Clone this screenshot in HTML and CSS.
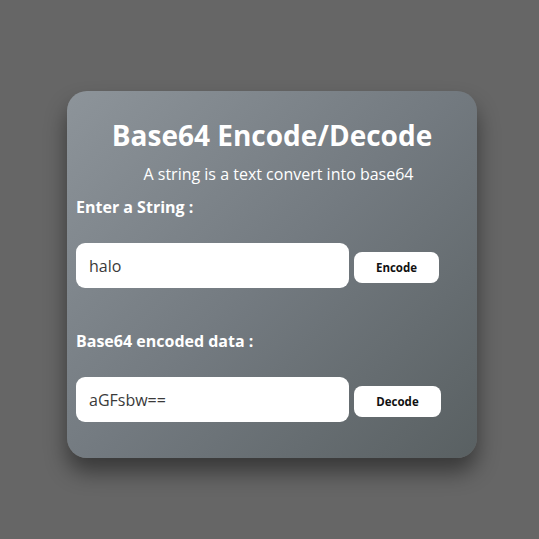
FILE: index.html
```html
<!DOCTYPE html>
<html>
<head>
<meta charset="utf-8">
<link rel="stylesheet" href="styles.css">
</head>
<body>
<div class="page">
  <div class="card">
    <h1 class="title">Base64 Encode/Decode</h1>
    <p class="subtitle">A string is a text convert into base64</p>
    <label class="label">Enter a String :</label>
    <div class="row">
      <input class="field" type="text" value="halo">
      <button class="btn">Encode</button>
    </div>
    <label class="label label-second">Base64 encoded data :</label>
    <div class="row">
      <input class="field" type="text" value="aGFsbw==">
      <button class="btn btn-decode">Decode</button>
    </div>
  </div>
</div>
</body>
</html>
```
FILE: styles.css
```css
html, body {
  margin: 0;
  padding: 0;
  background: #666666;
  height: 100%;
}
body {
  font-family: "Open Sans", "Noto Sans", sans-serif;
}
.page {
  padding: 91px 0 0 67px;
}
.card {
  width: 410px;
  height: 367px;
  box-sizing: border-box;
  border-radius: 20px;
  background: linear-gradient(135deg, #8d949a 0%, #737a80 50%, #596062 100%);
  box-shadow: 0 14px 22px rgba(0, 0, 0, 0.45);
  padding: 26px 0 0 9px;
  color: #ffffff;
}
.title {
  margin: 0;
  font-size: 28px;
  line-height: 36px;
  font-weight: 700;
  text-align: center;
  padding-right: 9px;
}
.subtitle {
  margin: 11px 0 0 0;
  font-size: 16px;
  line-height: 20px;
  text-align: center;
  padding: 0 0 0 4px;
  color: #ffffff;
}
.label {
  display: block;
  margin-top: 13px;
  font-size: 16px;
  line-height: 20px;
  font-weight: 700;
}
.label-second {
  margin-top: 43px;
}
.row {
  display: flex;
  align-items: center;
  gap: 5px;
  margin-top: 26px;
}
.field {
  width: 273px;
  height: 45px;
  box-sizing: border-box;
  border: none;
  border-radius: 9px;
  background: #ffffff;
  padding: 0 13px;
  font-family: inherit;
  font-size: 16px;
  color: #3a3a3a;
  outline: none;
}
.btn {
  height: 31px;
  width: 85px;
  margin-top: 4px;
  border: none;
  border-radius: 8px;
  background: #ffffff;
  font-family: inherit;
  font-size: 11.5px;
  font-weight: 700;
  color: #111111;
  padding: 0;
}
.btn-decode {
  width: 87px;
  margin-top: 3px;
}
```
